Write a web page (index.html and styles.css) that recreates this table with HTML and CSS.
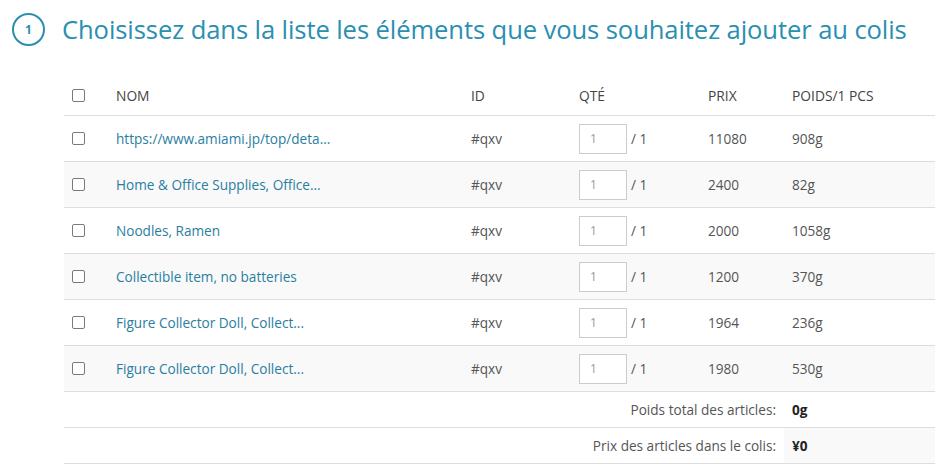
FILE: index.html
```html
<!DOCTYPE html>
<html lang="fr">
<head>
<meta charset="utf-8">
<title>Colis</title>
<link rel="stylesheet" href="styles.css">
</head>
<body>
<div class="page">
  <h1 class="title"><span class="step">1</span><span class="title-text">Choisissez dans la liste les éléments que vous souhaitez ajouter au colis</span></h1>
  <table class="items">
    <colgroup>
      <col class="c-check"><col class="c-name"><col class="c-id"><col class="c-qty"><col class="c-price"><col class="c-weight">
    </colgroup>
    <thead>
      <tr>
        <th><span class="cb"></span></th>
        <th>NOM</th>
        <th>ID</th>
        <th>QTÉ</th>
        <th>PRIX</th>
        <th>POIDS/1 PCS</th>
      </tr>
    </thead>
    <tbody>
      <tr>
        <td><span class="cb"></span></td>
        <td><a class="name" href="#">https://www.amiami.jp/top/deta...</a></td>
        <td>#qxv</td>
        <td><span class="qty"><span class="qty-input">1</span><span class="qty-max">/ 1</span></span></td>
        <td>11080</td>
        <td>908g</td>
      </tr>
      <tr class="alt">
        <td><span class="cb"></span></td>
        <td><a class="name" href="#">Home &amp; Office Supplies, Office...</a></td>
        <td>#qxv</td>
        <td><span class="qty"><span class="qty-input">1</span><span class="qty-max">/ 1</span></span></td>
        <td>2400</td>
        <td>82g</td>
      </tr>
      <tr>
        <td><span class="cb"></span></td>
        <td><a class="name" href="#">Noodles, Ramen</a></td>
        <td>#qxv</td>
        <td><span class="qty"><span class="qty-input">1</span><span class="qty-max">/ 1</span></span></td>
        <td>2000</td>
        <td>1058g</td>
      </tr>
      <tr class="alt">
        <td><span class="cb"></span></td>
        <td><a class="name" href="#">Collectible item, no batteries</a></td>
        <td>#qxv</td>
        <td><span class="qty"><span class="qty-input">1</span><span class="qty-max">/ 1</span></span></td>
        <td>1200</td>
        <td>370g</td>
      </tr>
      <tr>
        <td><span class="cb"></span></td>
        <td><a class="name" href="#">Figure Collector Doll, Collect...</a></td>
        <td>#qxv</td>
        <td><span class="qty"><span class="qty-input">1</span><span class="qty-max">/ 1</span></span></td>
        <td>1964</td>
        <td>236g</td>
      </tr>
      <tr class="alt">
        <td><span class="cb"></span></td>
        <td><a class="name" href="#">Figure Collector Doll, Collect...</a></td>
        <td>#qxv</td>
        <td><span class="qty"><span class="qty-input">1</span><span class="qty-max">/ 1</span></span></td>
        <td>1980</td>
        <td>530g</td>
      </tr>
    </tbody>
    <tfoot>
      <tr>
        <td class="sum-label" colspan="5">Poids total des articles:</td>
        <td class="sum-value">0g</td>
      </tr>
      <tr>
        <td class="sum-label" colspan="5">Prix des articles dans le colis:</td>
        <td class="sum-value shade">¥0</td>
      </tr>
    </tfoot>
  </table>
</div>
</body>
</html>
```

FILE: styles.css
```css
html, body {
  margin: 0;
  padding: 0;
  background: #fff;
}
body {
  font-family: "Open Sans", "Liberation Sans", sans-serif;
  color: #555;
  font-size: 13.6px;
}
.page {
  padding: 12px 9px 0 12px;
}
.title {
  display: flex;
  align-items: center;
  margin: 0;
  height: 34px;
  font-weight: 300;
}
.step {
  box-sizing: border-box;
  width: 33px;
  height: 33px;
  border: 2px solid #2a8fad;
  border-radius: 50%;
  display: flex;
  align-items: center;
  justify-content: center;
  font-size: 12px;
  font-weight: 700;
  color: #2a8fad;
  margin-right: 17px;
}
.title-text {
  font-size: 25.6px;
  color: #2a8fb0;
  font-weight: 400;
  letter-spacing: -0.1px;
}
.items {
  margin: 33px 0 0 52px;
  width: 871px;
  border-collapse: collapse;
  table-layout: fixed;
}
.c-check { width: 44px; }
.c-name { width: 355px; }
.c-id { width: 108px; }
.c-qty { width: 129px; }
.c-price { width: 84px; }
.c-weight { width: 151px; }
th {
  text-align: left;
  font-weight: 400;
  color: #444;
  font-size: 13.8px;
  height: 33px;
  padding: 0 8px 3px;
  border-bottom: 1px solid #ddd;
  vertical-align: middle;
}
td {
  height: 45px;
  padding: 0 8px;
  border-bottom: 1px solid #ddd;
  vertical-align: middle;
  color: #555;
}
tr.alt td {
  background: #f9f9f9;
}
.cb {
  display: block;
  box-sizing: border-box;
  width: 13px;
  height: 13px;
  border: 1px solid #7a7a7a;
  border-radius: 2px;
  background: #fff;
}
.name {
  color: #2a7ea1;
  text-decoration: none;
}
.qty {
  display: flex;
  align-items: center;
}
.qty-input {
  box-sizing: border-box;
  width: 48px;
  height: 30px;
  border: 1px solid #ccc;
  background: #fff;
  color: #999;
  font-size: 12px;
  display: flex;
  align-items: center;
  padding-left: 10px;
}
.qty-max {
  margin-left: 4px;
}
tfoot td {
  height: 35px;
  border-bottom: 1px solid #ddd;
}
.sum-label {
  text-align: right;
  color: #555;
}
.sum-value {
  font-weight: 700;
  color: #222;
}
.sum-value.shade {
  background: #f9f9f9;
}
```
